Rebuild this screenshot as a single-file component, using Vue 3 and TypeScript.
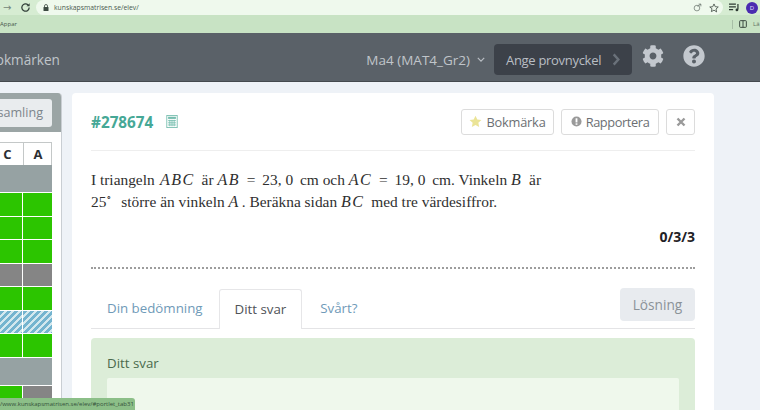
<template>
  <div class="page">
    <div class="browser-top">
      <span class="arrow">→</span>
      <svg class="reload" viewBox="0 0 24 24" width="11" height="11"><path d="M20 12a8 8 0 1 1-2.4-5.700" fill="none" stroke="#33403a" stroke-width="2.800" /><path d="M21 2.500v7h-7z" fill="#33403a" /></svg>
      <div class="address">
        <svg class="lock" viewBox="0 0 12 14" width="6" height="7"><path d="M3 6V4a3 3 0 0 1 6 0v2" fill="none" stroke="#3c4a42" stroke-width="1.600" /><rect x="1" y="6" width="10" height="8" rx="1" fill="#3c4a42" /></svg>
        <span class="url">kunskapsmatrisen.se/elev/</span>
        <span class="spacer"></span>
        <svg viewBox="0 0 16 16" width="9" height="9"><circle cx="7" cy="9" r="5" fill="none" stroke="#68736c" stroke-width="1.300" /><path d="M8 6l6-4M10 2h4v4" fill="none" stroke="#68736c" stroke-width="1.300" /></svg>
        <svg class="bookmark-star" viewBox="0 0 16 16" width="10" height="10"><path d="M8 1.500l2 4.400 4.800.5-3.600 3.200 1 4.700L8 11.400l-4.200 2.400 1-4.700L1.200 6.400l4.800-.5z" fill="none" stroke="#4b564f" stroke-width="1.400" /></svg>
      </div>
      <svg class="media" viewBox="0 0 16 12" width="11" height="9"><path d="M0 1h10M0 5h10M0 9h6" stroke="#2e3a33" stroke-width="1.700" /><path d="M13 1v8" stroke="#2e3a33" stroke-width="1.800" /><circle cx="11.500" cy="9.500" r="2" fill="#2e3a33" /></svg>
      <span class="avatar">D</span>
    </div>
    <div class="bookmarks">
      <span class="apps">Appar</span>
      <span class="spacer"></span>
      <span class="divider"></span>
      <svg viewBox="0 0 12 12" width="8" height="8"><rect x="1" y="1" width="10" height="10" rx="1" fill="none" stroke="#3b4a40" stroke-width="1.500" /><path d="M6 1v10" stroke="#3b4a40" stroke-width="1.500" /></svg>
      <span class="reading">Lä</span>
    </div>

    <header class="navbar">
      <span class="nav-link">Bokmärken</span>
      <span class="spacer"></span>
      <span class="course">Ma4 (MAT4_Gr2)</span>
      <svg class="caret" viewBox="0 0 10 6" width="8" height="5"><path d="M1 1l4 4 4-4" fill="none" stroke="#b9bec4" stroke-width="1.500" /></svg>
      <div class="key-button">
        <span>Ange provnyckel</span>
        <svg viewBox="0 0 8 14" width="8" height="13"><path d="M1.500 1.500L6.500 7l-5 5.500" fill="none" stroke="#6a717a" stroke-width="2.600" /></svg>
      </div>
      <svg class="nav-icon gear" viewBox="0 0 512 512"><path fill="#c3c8ce" d="M487.4 315.7l-42.6-24.6c4.3-23.2 4.3-47 0-70.2l42.6-24.6c4.9-2.8 7.1-8.6 5.5-14-11.1-35.6-30-67.8-54.7-94.6-3.8-4.1-10-5.1-14.8-2.3L380.8 110c-17.9-15.4-38.5-27.3-60.8-35.1V25.8c0-5.6-3.9-10.5-9.4-11.7-36.7-8.2-74.3-7.8-109.2 0-5.5 1.2-9.4 6.1-9.4 11.7V75c-22.2 7.9-42.8 19.8-60.8 35.1L88.7 85.5c-4.9-2.8-11-1.9-14.8 2.3-24.7 26.7-43.6 58.9-54.7 94.6-1.7 5.4.6 11.2 5.5 14L67.3 221c-4.3 23.2-4.3 47 0 70.2l-42.6 24.6c-4.9 2.8-7.1 8.6-5.5 14 11.1 35.6 30 67.8 54.7 94.6 3.8 4.1 10 5.1 14.8 2.3l42.6-24.6c17.9 15.4 38.5 27.3 60.8 35.1v49.2c0 5.6 3.9 10.5 9.4 11.7 36.7 8.2 74.3 7.8 109.2 0 5.5-1.2 9.4-6.1 9.4-11.7v-49.2c22.2-7.9 42.8-19.8 60.8-35.1l42.6 24.6c4.9 2.8 11 1.9 14.8-2.3 24.7-26.7 43.6-58.9 54.7-94.6 1.5-5.5-.7-11.3-5.6-14.1zM256 336c-44.1 0-80-35.9-80-80s35.9-80 80-80 80 35.9 80 80-35.9 80-80 80z" /></svg>
      <svg class="nav-icon help" viewBox="0 0 512 512"><path fill="#c3c8ce" d="M504 256c0 136.997-111.043 248-248 248S8 392.997 8 256C8 119.083 119.043 8 256 8s248 111.083 248 248zM262.655 90c-54.497 0-89.255 22.957-116.549 63.758-3.536 5.286-2.353 12.415 2.715 16.258l34.699 26.31c5.205 3.947 12.621 3.008 16.665-2.122 17.864-22.658 30.113-35.797 57.303-35.797 20.429 0 45.698 13.148 45.698 32.958 0 14.976-12.363 22.667-32.534 33.976C247.128 238.528 216 254.941 216 296v4c0 6.627 5.373 12 12 12h56c6.627 0 12-5.373 12-12v-1.333c0-28.462 83.186-29.647 83.186-106.667 0-58.002-60.165-102-116.531-102zM256 338c-25.365 0-46 20.635-46 46 0 25.364 20.635 46 46 46s46-20.636 46-46c0-25.365-20.635-46-46-46z" /></svg>
    </header>

    <div class="content">
      <aside class="sidebar">
        <div class="side-head">
          <button class="collection">Provsamling</button>
        </div>
        <div class="matrix">
          <div class="matrix-row head"><span>C</span><span>A</span></div>
          <div
            v-for="(row, i) in rows"
            :key="i"
            class="matrix-row"
            :class="`matrix-row--${row}`"
          >
            <span></span><span></span>
          </div>
          <div class="matrix-row last"><span class="green"></span><span class="dark"></span></div>
        </div>
      </aside>

      <main class="card">
        <div class="card-head">
          <span class="task-id">#278674</span>
          <svg class="calc" viewBox="0 0 13 15" width="12" height="13">
            <rect x="0.5" y="0.5" width="12" height="14" fill="none" stroke="#75bdae" />
            <rect x="2" y="2" width="9" height="2.500" fill="#75bdae" />
            <path d="M2 6.500h9M2 9h9M2 11.500h9M4 5.500v7.500M6.500 5.500v7.500M9 5.500v7.500" stroke="#75bdae" stroke-width="1" />
          </svg>
          <span class="spacer"></span>
          <button class="tool-btn bookmark">
            <svg viewBox="0 0 16 16" width="13" height="13"><path d="M8 .8l2.200 4.700 5.100.6-3.800 3.500 1 5.100L8 12.200l-4.500 2.500 1-5.100L.7 6.100l5.100-.6z" fill="#ebe497" /></svg>
            Bokmärka
          </button>
          <button class="tool-btn report">
            <svg viewBox="0 0 12 12" width="11" height="11"><circle cx="6" cy="6" r="5.500" fill="#9a9a9a" /><rect x="5" y="2.500" width="2" height="4.500" fill="#fff" /><rect x="5" y="8" width="2" height="1.600" fill="#fff" /></svg>
            Rapportera
          </button>
          <button class="tool-btn close">
            <svg viewBox="0 0 10 10" width="10" height="10"><path d="M1.500 1.500l7 7M8.500 1.500l-7 7" stroke="#9a9a9a" stroke-width="2.400" /></svg>
          </button>
        </div>

        <p class="question">
          I triangeln <i class="first">ABC</i> <span class="gap"></span>är <i>AB</i> <span class="op">=</span> 23, 0<span class="gap"></span> cm och <i>AC</i> <span class="op">=</span> 19, 0<span class="gap"></span> cm. Vinkeln <i>B</i> <span class="gap"></span>är<br />
          25<sup>∘</sup><span class="gap gap--wide"></span> större än vinkeln <i>A</i><span class="thin"></span>. Beräkna sidan <i>BC</i> <span class="gap"></span>med tre värdesiffror.
        </p>

        <div class="score">0/3/3</div>
        <div class="dots"></div>

        <div class="tabs">
          <a class="tab">Din bedömning</a>
          <a class="tab tab--active">Ditt svar</a>
          <a class="tab tab--last">Svårt?</a>
          <span class="spacer"></span>
          <button class="solution">Lösning</button>
        </div>

        <section class="answer">
          <h4>Ditt svar</h4>
          <div class="answer-box"></div>
        </section>
      </main>
    </div>

    <div class="status">/www.kunskapsmatrisen.se/elev/#portlet_tab31</div>
  </div>
</template>

<script setup lang="ts">
type RowKind = 'grey' | 'green' | 'dark' | 'hatched'

const rows: RowKind[] = ['grey', 'green', 'green', 'green', 'dark', 'green', 'hatched', 'green', 'grey']
</script>

<style>
html, body { margin: 0; background: #eef2f7; }
</style>

<style scoped>
.page { position: relative; width: 760px; height: 410px; overflow: hidden; background: #eef2f7; font-family: "Open Sans", "Liberation Sans", sans-serif; }
.spacer { flex: 1; }

.browser-top { height: 15px; display: flex; align-items: center; padding: 0 2px 0 3px; background: #d6ecd2; }
.arrow { width: 11px; font-size: 10px; line-height: 15px; color: #74877a; font-family: "DejaVu Sans", sans-serif; }
.reload { margin-left: 6px; }
.address { flex: 1; height: 15px; margin-left: 5px; padding: 0 4px 0 7px; display: flex; align-items: center; background: #eff9ed; border-radius: 8px; }
.url { margin-left: 5px; font-size: 6.8px; color: #4a5a50; }
.bookmark-star { margin-left: 7px; }
.media { margin-left: 6px; }
.avatar { width: 12px; height: 12px; margin-left: 6px; border-radius: 50%; background: #4a2bb0; color: #e6e0ff; font-size: 6px; line-height: 12px; text-align: center; }

.bookmarks { height: 18px; display: flex; align-items: center; gap: 6px; background: #c8e3c4; }
.apps { font-size: 6px; color: #47584c; }
.divider { width: 1px; height: 9px; background: #a7bfa6; }
.reading { width: 7px; font-size: 6px; color: #5f6f63; }

.navbar { height: 48px; display: flex; align-items: center; padding: 0 55px 0 0; background: #5a6168; border-bottom: 1px solid #44494e; color: #c0c5ca; }
.nav-link { margin-left: -13px; margin-top: 5px; font-size: 13.6px; }
.course { margin-top: 5px; font-size: 13.5px; }
.caret { margin-left: 7px; margin-top: 5px; }
.key-button { width: 138px; height: 31px; box-sizing: border-box; margin-left: 9px; margin-top: 5px; padding: 0 12px; display: flex; align-items: center; justify-content: space-between; background: #3c4149; border-radius: 4px; font-size: 13px; letter-spacing: -0.3px; color: #b9bec4; }
.nav-icon { width: 22px; height: 22px; margin-top: -2px; }
.gear { margin-left: 10px; }
.help { margin-left: 19px; }

.content { display: flex; align-items: flex-start; gap: 10px; padding-top: 11px; height: 317px; box-sizing: border-box; }

.sidebar { width: 62px; flex: none; height: 318px; box-sizing: border-box; overflow: hidden; background: #fff; border-right: 1px solid #c9ced3; border-radius: 0 4px 0 0; }
.side-head { height: 39px; display: flex; align-items: center; justify-content: flex-end; padding-right: 9px; background: #9ba5a5; }
.collection { flex: none; height: 28px; padding: 0 9px; border: none; border-radius: 3px; background: #e9ecee; font: 12.6px "Open Sans", sans-serif; color: #7d858c; }
.matrix { margin: 10px 0 0 -7px; width: 59px; }
.matrix-row { display: grid; grid-template-columns: 29px 29px; gap: 1px; height: 22.5px; margin-bottom: 1px; }
.matrix-row span { display: block; }
.matrix-row.head { height: 22px; border-top: 1px solid #c4c8c8; border-right: 1px solid #c4c8c8; margin-bottom: 0; font-weight: 700; font-size: 13px; line-height: 22px; text-align: center; color: #2c2f33; }
.matrix-row.head span + span { border-left: 1px solid #c4c8c8; }
.matrix-row--grey { height: 27px; grid-template-columns: 1fr; background: #96a2a3; }
.matrix-row--green span, .matrix-row .green { background: #2cc500; }
.matrix-row--dark span, .matrix-row .dark { background: #858585; }
.matrix-row--hatched span { background: repeating-linear-gradient(135deg, #74b4cf 0 3px, #d3e8ee 3px 5px); }
.matrix-row.last { height: 30px; }

.card { width: 642px; height: 318px; box-sizing: border-box; padding: 0 19px; background: #fff; border-radius: 4px 4px 0 0; }
.card-head { height: 57px; display: flex; align-items: center; gap: 7px; border-bottom: 1px solid #eeeeee; }
.task-id { font-size: 15.3px; font-weight: 700; color: #46a896; }
.calc { margin-left: 6px; }
.tool-btn { height: 26px; padding: 0; display: flex; align-items: center; justify-content: center; gap: 4px; border: 1px solid #dcdcdc; border-radius: 3px; background: #fff; font: 12.8px "Open Sans", sans-serif; letter-spacing: -0.2px; color: #6c6f73; }
.bookmark { width: 93px; }
.report { width: 98px; letter-spacing: -0.4px; }
.close { width: 29px; }

.question { margin: 18px 0 0; font: 15.4px/22px "Liberation Serif", serif; color: #2f2f2f; }
.question i { font-size: 16px; letter-spacing: 1.5px; }
.question i.first { margin-left: 1.5px; }
.question sup { font-size: 9px; line-height: 0; }
.gap { display: inline-block; width: 3px; }
.gap--wide { width: 5px; }
.thin { display: inline-block; width: 2px; }
.op { margin: 0 3px; }

.score { margin-top: 14px; text-align: right; font-size: 14px; font-weight: 700; line-height: 20px; color: #1f2226; }
.dots { margin-top: 20px; border-top: 2px dotted #9d9d9d; }

.tabs { height: 40px; margin-top: 19px; display: flex; align-items: flex-end; border-bottom: 1px solid #e4e4e6; }
.tab { height: 39px; box-sizing: border-box; padding: 0 16px; line-height: 39px; font-size: 13.3px; color: #6f9ab8; }
.tab--active { margin-bottom: -1px; height: 40px; padding: 0 15px; background: #fff; border: 1px solid #e6e6e8; border-bottom: none; border-radius: 3px 3px 0 0; color: #4f5358; }
.tab--last { margin-left: 2px; }
.solution { align-self: flex-start; height: 33px; width: 75px; border: none; border-radius: 4px; background: #e8ebef; font: 13.7px "Open Sans", sans-serif; color: #8b9298; }

.answer { margin-top: 9px; height: 80px; padding: 15px 16px 0; box-sizing: border-box; background: #dcedd8; border-radius: 4px 4px 0 0; }
.answer h4 { margin: 0; font-size: 13.3px; font-weight: 400; line-height: 20px; color: #4a6a4c; }
.answer-box { margin-top: 5px; height: 40px; background: #eff8ec; border-radius: 2px; }

.status { position: absolute; left: 0; bottom: 0; height: 12px; width: 135px; box-sizing: border-box; white-space: nowrap; background: #8cbf88; border-radius: 0 3px 0 0; font-size: 6px; line-height: 13px; color: #33503a; }
</style>
